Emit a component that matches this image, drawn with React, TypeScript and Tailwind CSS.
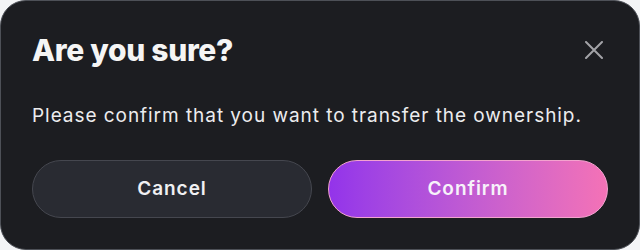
import React from "react";

export default function App() {
  return (
    <div className="w-[640px] h-[250px] bg-[#f3f4f6]" style={{ fontFamily: "Inter, 'Noto Sans', sans-serif" }}>
      <div className="w-full h-full rounded-[26px] border border-[#4d5057] bg-[#1c1d21] px-[31px] pt-[31px] flex flex-col">
        <div className="flex items-center justify-between">
          <h1 className="text-[30px] leading-[36px] font-extrabold tracking-[-0.01em] text-[#f5f5f5]">Are you sure?</h1>
          <button className="mr-[5px] text-[#a3a3a8]" aria-label="Close">
            <svg width="18" height="18" viewBox="0 0 18 18" fill="none" stroke="currentColor" strokeWidth="2" strokeLinecap="round">
              <path d="M1 1 L17 17 M17 1 L1 17" />
            </svg>
          </button>
        </div>
        <p className="mt-[34px] text-[19px] leading-[28px] tracking-[0.05em] text-[#ececee]">
          Please confirm that you want to transfer the ownership.
        </p>
        <div className="mt-[30px] grid grid-cols-2 gap-4">
          <button className="h-[58px] rounded-full border border-[#45474f] bg-[#292b32] text-[19px] font-semibold tracking-[0.05em] text-[#f0f0f2]">
            Cancel
          </button>
          <button className="h-[58px] rounded-full border border-[#f3a3cf] bg-gradient-to-r from-[#9333ea] to-[#f472b6] text-[19px] font-semibold tracking-[0.05em] text-[#f7f2fa]">
            Confirm
          </button>
        </div>
      </div>
    </div>
  );
}
